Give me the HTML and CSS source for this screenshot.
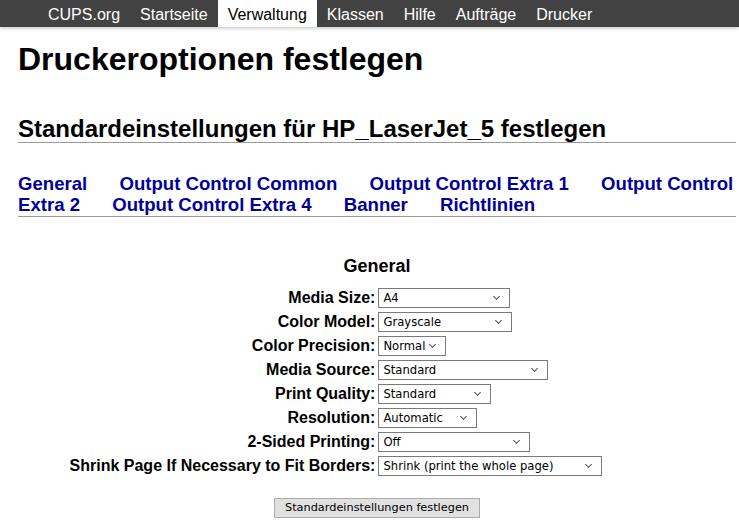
FILE: index.html
```html
<!DOCTYPE html>
<html lang="de">
<head>
  <meta charset="UTF-8">
  <title>Druckeroptionen festlegen - CUPS</title>
  <link rel="stylesheet" href="styles.css">
</head>
<body>
  <!-- Kopfleiste -->
  <div class="header">
    <ul class="nav">
      <li><a href="#">CUPS.org</a></li>
      <li><a href="#">Startseite</a></li>
      <li><a class="active" href="#">Verwaltung</a></li>
      <li><a href="#">Klassen</a></li>
      <li><a href="#">Hilfe</a></li>
      <li><a href="#">Aufträge</a></li>
      <li><a href="#">Drucker</a></li>
    </ul>
  </div>

  <div class="body">
    <h1>Druckeroptionen festlegen</h1>
    <h2 class="title">Standardeinstellungen für HP_LaserJet_5 festlegen</h2>

    <div class="tabs">
      <a href="#">General</a>
      <a href="#">Output Control Common</a>
      <a href="#">Output Control Extra 1</a>
      <a href="#">Output Control Extra 2</a>
      <a href="#">Output Control Extra 4</a>
      <a href="#">Banner</a>
      <a href="#">Richtlinien</a>
    </div>

    <form class="options">
      <h3>General</h3>
      <div class="table-wrap">
        <table>
          <tr>
            <th>Media Size:</th>
            <td><span class="sel w-size"><select><option>A4</option></select></span></td>
          </tr>
          <tr>
            <th>Color Model:</th>
            <td><span class="sel w-color"><select><option>Grayscale</option></select></span></td>
          </tr>
          <tr>
            <th>Color Precision:</th>
            <td><span class="sel w-prec"><select><option>Normal</option></select></span></td>
          </tr>
          <tr>
            <th>Media Source:</th>
            <td><span class="sel w-source"><select><option>Standard</option></select></span></td>
          </tr>
          <tr>
            <th>Print Quality:</th>
            <td><span class="sel w-quality"><select><option>Standard</option></select></span></td>
          </tr>
          <tr>
            <th>Resolution:</th>
            <td><span class="sel w-res"><select><option>Automatic</option></select></span></td>
          </tr>
          <tr>
            <th>2-Sided Printing:</th>
            <td><span class="sel w-duplex"><select><option>Off</option></select></span></td>
          </tr>
          <tr>
            <th>Shrink Page If Necessary to Fit Borders:</th>
            <td><span class="sel w-shrink"><select><option>Shrink (print the whole page)</option></select></span></td>
          </tr>
        </table>
      </div>
      <div class="submit">
        <button type="button">Standardeinstellungen festlegen</button>
      </div>
    </form>
  </div>
</body>
</html>
```

FILE: styles.css
```css
body {
  margin: 0;
  padding: 0;
  background: #fff;
  color: #000;
  font-family: "Liberation Sans", Arial, sans-serif;
}
.header {
  background: #424242;
  height: 27px;
  box-shadow: 0 1px 4px rgba(0,0,0,0.25);
}
.nav {
  list-style: none;
  margin: 0;
  padding: 0 0 0 38px;
  display: flex;
}
.nav a {
  display: block;
  height: 27px;
  line-height: 29px;
  padding: 0 10px;
  font-size: 16px;
  color: #fff;
  text-decoration: none;
}
.nav a.active {
  background: #fff;
  color: #000;
}
.body {
  margin: 0 3px 0 18px;
}
h1 {
  font-size: 32px;
  margin: 14px 0 0 0;
  line-height: 37px;
}
h2.title {
  font-size: 24px;
  line-height: 27px;
  margin: 37px 0 0 0;
  border-bottom: 1px solid #999;
}
.tabs {
  margin-top: 30px;
  font-size: 18.6px;
  font-weight: bold;
  line-height: 21px;
  border-bottom: 1px solid #999;
  padding-bottom: 1px;
}
.tabs a {
  color: #000099;
  text-decoration: none;
  margin-right: 27px;
}
.options {
  text-align: center;
}
h3 {
  font-size: 18px;
  line-height: 21px;
  margin: 39px 0 9px 0;
}
.table-wrap {
  padding-right: 82px;
}
table {
  margin: 0 auto;
  border-collapse: collapse;
}
th {
  text-align: right;
  font-size: 16px;
  padding: 0 3px 0 0;
  height: 24px;
  vertical-align: middle;
}
td {
  text-align: left;
  padding: 0;
  vertical-align: middle;
}
.sel {
  position: relative;
  display: inline-block;
  vertical-align: middle;
}
.sel select {
  -webkit-appearance: none;
  appearance: none;
  width: 100%;
  height: 20px;
  border: 1px solid #7a7a7a;
  border-radius: 0;
  background: #fff;
  font-family: "DejaVu Sans", Tahoma, sans-serif;
  font-size: 11.6px;
  color: #000;
  padding: 0 0 0 4px;
  margin: 0;
}
.sel::after {
  content: "";
  position: absolute;
  right: 11px;
  top: 6px;
  width: 4px;
  height: 4px;
  border-right: 1px solid #555;
  border-bottom: 1px solid #555;
  transform: rotate(45deg);
  pointer-events: none;
}
.w-size { width: 132px; }
.w-color { width: 134px; }
.w-prec { width: 68px; }
.w-source { width: 170px; }
.w-quality { width: 113px; }
.w-res { width: 99px; }
.w-duplex { width: 152px; }
.w-shrink { width: 224px; }
.submit {
  margin-top: 19px;
}
.submit button {
  font-family: "DejaVu Sans", Tahoma, sans-serif;
  font-size: 11.3px;
  height: 20px;
  padding: 0 10px;
  background: #e1e1e1;
  border: 1px solid #adadad;
  border-radius: 0;
  color: #000;
}
```
